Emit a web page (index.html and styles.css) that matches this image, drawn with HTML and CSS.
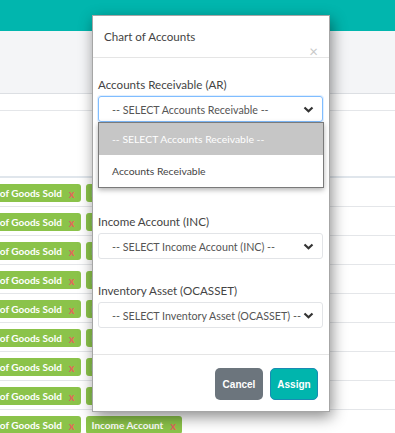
FILE: index.html
```html
<!DOCTYPE html>
<html lang="en">
<head>
    <meta charset="UTF-8">
    <meta name="viewport" content="width=device-width, initial-scale=1.0">
    <title>Chart of Accounts</title>
    <link rel="stylesheet" href="styles.css">
</head>
<body>
    <div class="topbar"></div>
    <div class="subbar"></div>

    <div class="table">
        <div class="row row-head"></div>
        <div class="row row-tall"></div>
        <div class="row"><div class="tags"><span class="tag">Cost of Goods Sold <i>x</i></span><span class="tag">Income Account <i>x</i></span></div></div>
        <div class="row"><div class="tags"><span class="tag">Cost of Goods Sold <i>x</i></span><span class="tag">Income Account <i>x</i></span></div></div>
        <div class="row"><div class="tags"><span class="tag">Cost of Goods Sold <i>x</i></span><span class="tag">Income Account <i>x</i></span></div></div>
        <div class="row"><div class="tags"><span class="tag">Cost of Goods Sold <i>x</i></span><span class="tag">Income Account <i>x</i></span></div></div>
        <div class="row"><div class="tags"><span class="tag">Cost of Goods Sold <i>x</i></span><span class="tag">Income Account <i>x</i></span></div></div>
        <div class="row"><div class="tags"><span class="tag">Cost of Goods Sold <i>x</i></span><span class="tag">Income Account <i>x</i></span></div></div>
        <div class="row"><div class="tags"><span class="tag">Cost of Goods Sold <i>x</i></span><span class="tag">Income Account <i>x</i></span></div></div>
        <div class="row"><div class="tags"><span class="tag">Cost of Goods Sold <i>x</i></span><span class="tag">Income Account <i>x</i></span></div></div>
        <div class="row"><div class="tags"><span class="tag">Cost of Goods Sold <i>x</i></span><span class="tag">Income Account <i>x</i></span></div></div>
    </div>

    <!-- modal -->
    <div class="modal">
        <div class="modal-header">
            <h4 class="modal-title">Chart of Accounts</h4>
            <span class="close">&times;</span>
        </div>
        <div class="modal-body">
            <div class="form-group first">
                <label>Accounts Receivable (AR)</label>
                <div class="select focus">
                    <span>-- SELECT Accounts Receivable --</span>
                    <svg class="chevron" width="11" height="7" viewBox="0 0 11 7"><polyline points="1.5,1.5 5.5,5.2 9.5,1.5" fill="none" stroke="#333" stroke-width="2.2"/></svg>
                </div>
                <ul class="dropdown">
                    <li class="active">-- SELECT Accounts Receivable --</li>
                    <li>Accounts Receivable</li>
                </ul>
            </div>
            <div class="form-group">
                <label>Income Account (INC)</label>
                <div class="select">
                    <span>-- SELECT Income Account (INC) --</span>
                    <svg class="chevron" width="11" height="7" viewBox="0 0 11 7"><polyline points="1.5,1.5 5.5,5.2 9.5,1.5" fill="none" stroke="#333" stroke-width="2.2"/></svg>
                </div>
            </div>
            <div class="form-group">
                <label>Inventory Asset (OCASSET)</label>
                <div class="select">
                    <span>-- SELECT Inventory Asset (OCASSET) --</span>
                    <svg class="chevron" width="11" height="7" viewBox="0 0 11 7"><polyline points="1.5,1.5 5.5,5.2 9.5,1.5" fill="none" stroke="#333" stroke-width="2.2"/></svg>
                </div>
            </div>
        </div>
        <div class="modal-footer">
            <button class="btn btn-cancel">Cancel</button>
            <button class="btn btn-assign">Assign</button>
        </div>
    </div>
</body>
</html>
```

FILE: styles.css
```css
body {
    margin: 0;
    font-family: Lato, "Open Sans", sans-serif;
    background: #fff;
    overflow: hidden;
    height: 433px;
}
.topbar {
    height: 31px;
    background: #01b6ae;
}
.subbar {
    height: 62px;
    background: #f4f5f7;
    border-bottom: 1px solid #dcdfe3;
}
.row {
    height: 28px;
    border-bottom: 1px solid #e4e6e9;
}
.row-head {
    height: 16px;
}
.row-tall {
    height: 65px;
    border-bottom: 2px solid #e0e6ec;
}
.tags {
    display: flex;
    gap: 5px;
    margin-left: -29px;
    padding-top: 6px;
}
.tag {
    display: inline-flex;
    align-items: center;
    height: 18px;
    padding: 0 6px;
    background: #8bc34a;
    color: #fff;
    font-size: 10px;
    font-weight: 700;
    border-radius: 3px;
    white-space: nowrap;
}
.tag i {
    font-style: normal;
    font-weight: 700;
    color: #e2655c;
    font-size: 11px;
    margin-left: 7px;
}

/* modal */
.modal {
    position: absolute;
    left: 92px;
    top: 15px;
    width: 236px;
    height: 395px;
    background: #fff;
    border: 1px solid rgba(0, 0, 0, 0.35);
    box-shadow: 2px 5px 14px rgba(0, 0, 0, 0.45);
    display: flex;
    flex-direction: column;
}
.modal-header {
    position: relative;
    height: 42px;
    border-bottom: 1px solid #e5e5e5;
    padding: 13px 11px 0;
    box-sizing: border-box;
}
.modal-title {
    margin: 0;
    font-size: 11.6px;
    font-weight: 400;
    line-height: 16px;
    color: #444;
}
.close {
    position: absolute;
    right: 11px;
    top: 28px;
    font-size: 15px;
    line-height: 15px;
    color: #c8c8c8;
}
.modal-body {
    flex: 1;
    padding: 19px 6px 0 5px;
}
.form-group {
    position: relative;
    margin-bottom: 24px;
}
.form-group.first {
    margin-bottom: 92px;
}
label {
    display: block;
    font-size: 11.6px;
    line-height: 16px;
    color: #444;
    margin-bottom: 3px;
}
.select {
    display: flex;
    align-items: center;
    justify-content: space-between;
    height: 26px;
    box-sizing: border-box;
    border: 1px solid #e2e4e7;
    border-radius: 3px;
    padding: 0 8px 0 13px;
    font-size: 10.7px;
    color: #555;
    white-space: nowrap;
}
.select.focus {
    border-color: #80bdff;
    box-shadow: 0 0 0 1px rgba(0, 123, 255, 0.12);
}
.dropdown {
    position: absolute;
    left: 0;
    right: -1px;
    top: 45px;
    margin: 0;
    padding: 0;
    list-style: none;
    background: #fff;
    border: 1px solid #7a7a7a;
    box-shadow: 0 2px 5px rgba(0, 0, 0, 0.3);
    z-index: 2;
}
.dropdown li {
    height: 32px;
    line-height: 32px;
    padding-left: 13px;
    font-size: 10.4px;
    color: #444;
}
.dropdown li.active {
    background: #c6c6c6;
    color: #fff;
}
.modal-footer {
    height: 57px;
    box-sizing: border-box;
    border-top: 1px solid #e5e5e5;
    padding: 13px 11px 0;
    display: flex;
    justify-content: flex-end;
    gap: 7px;
}
.btn {
    width: 48px;
    height: 32px;
    border: none;
    border-radius: 5px;
    color: #fff;
    font-family: "Liberation Sans", Arial, sans-serif;
    font-size: 10px;
    font-weight: bold;
    padding: 0;
}
.btn-cancel {
    background: #6c757d;
}
.btn-assign {
    background: #00b5ad;
    border: 1px solid #1a8ab3;
}
```
